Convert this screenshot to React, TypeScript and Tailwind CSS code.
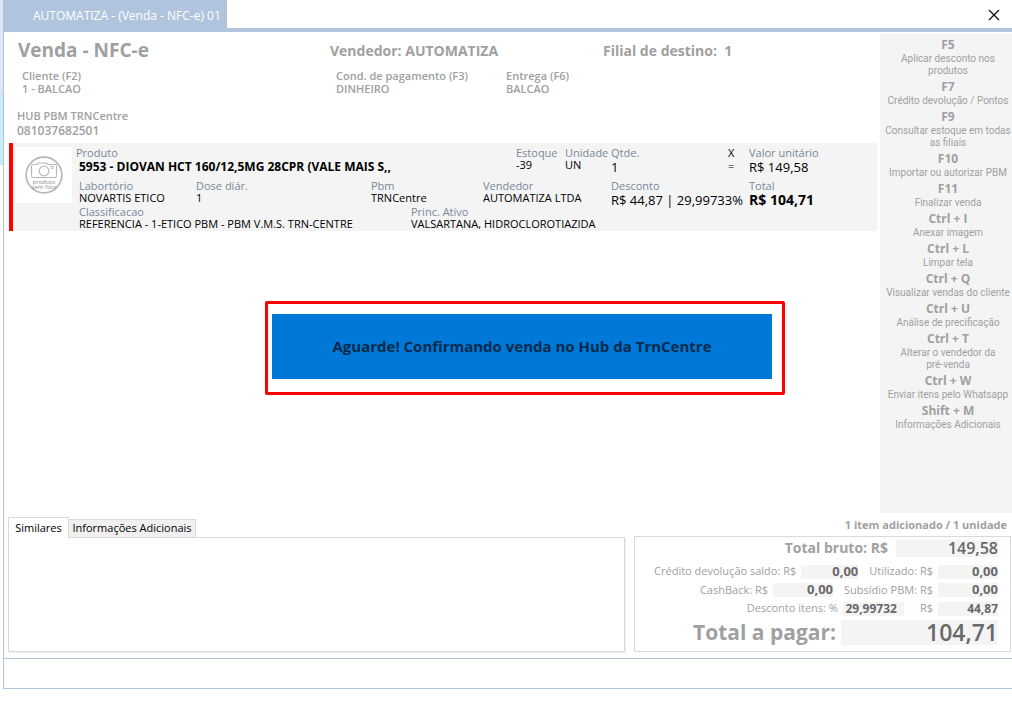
import type { ReactNode } from "react";

const shortcuts = [
  { keys: "F5", lines: ["Aplicar desconto nos", "produtos"] },
  { keys: "F7", lines: ["Crédito devolução / Pontos"] },
  { keys: "F9", lines: ["Consultar estoque em todas", "as filiais"] },
  { keys: "F10", lines: ["Importar ou autorizar PBM"] },
  { keys: "F11", lines: ["Finalizar venda"] },
  { keys: "Ctrl + I", lines: ["Anexar imagem"] },
  { keys: "Ctrl + L", lines: ["Limpar tela"] },
  { keys: "Ctrl + Q", lines: ["Visualizar vendas do cliente"] },
  { keys: "Ctrl + U", lines: ["Análise de precificação"] },
  { keys: "Ctrl + T", lines: ["Alterar o vendedor da", "pré-venda"] },
  { keys: "Ctrl + W", lines: ["Enviar itens pelo Whatsapp"] },
  { keys: "Shift + M", lines: ["Informações Adicionais"] },
];

function TitleBar() {
  return (
    <header className="flex h-8 items-stretch justify-between border-b-4 border-[#b0c4de]">
      <div className="flex w-[223px] items-center bg-[#b0c4de] pt-1 pl-[29px] text-xs text-white">
        AUTOMATIZA - (Venda - NFC-e) 01
      </div>
      <button type="button" aria-label="Fechar" className="mr-3 flex w-3 items-center pt-0.5">
        <svg viewBox="0 0 12 12" className="h-3 w-3" stroke="#111" strokeWidth="1.3" fill="none">
          <path d="M1 1 11 11M11 1 1 11" />
        </svg>
      </button>
    </header>
  );
}

function Info({ label, value }: { label: string; value: string }) {
  return (
    <div className="text-[11px] leading-[13px] font-semibold">
      <div>{label}</div>
      <div>{value}</div>
    </div>
  );
}

function SaleHeader() {
  return (
    <section className="h-[111px] text-[#a0a0a0]">
      <div className="grid h-[37px] grid-cols-[312px_273px_1fr] items-center pl-[14px] font-bold">
        <h1 className="text-[19px]">Venda - NFC-e</h1>
        <div className="text-sm">Vendedor: AUTOMATIZA</div>
        <div className="text-sm whitespace-pre">Filial de destino:  1</div>
      </div>
      <div className="grid grid-cols-[314px_170px_1fr] pl-[18px]">
        <Info label="Cliente (F2)" value="1 - BALCAO" />
        <Info label="Cond. de pagamento (F3)" value="DINHEIRO" />
        <Info label="Entrega (F6)" value="BALCAO" />
      </div>
      <div className="pt-[14px] pl-[13px] font-semibold">
        <div className="text-[11px] leading-[14px]">HUB PBM TRNCentre</div>
        <div className="text-xs leading-4">081037682501</div>
      </div>
    </section>
  );
}

function ProductPhoto() {
  return (
    <div className="flex h-14 w-14 items-center justify-center bg-white">
      <svg viewBox="0 0 38 38" className="h-[38px] w-[38px]" fill="none" stroke="#b8b8b8">
        <circle cx="19" cy="19" r="17.800" strokeWidth="1.700" />
        <path d="M6.500 20V10q0-1.500 1.500-1.500h4l1.500-1.500h8l1.500 1.500h7q1.500 0 1.500 1.500v10q0 1.500-1.500 1.500H8q-1.500 0-1.500-1.500Z" strokeWidth="1.200" />
        <circle cx="19" cy="15" r="4.800" strokeWidth="1.200" />
        <rect x="26" y="10.500" width="2.500" height="2" strokeWidth=".8" />
        <g fill="#8c8c8c" stroke="none" fontSize="6" textAnchor="middle" fontFamily="Open Sans, sans-serif">
          <text x="19" y="27.500">produto</text>
          <text x="19" y="32.500">sem foto</text>
        </g>
      </svg>
    </div>
  );
}

function Cell({ label, className = "text-[11px]", children }: { label: string; className?: string; children: ReactNode }) {
  return (
    <div className="whitespace-nowrap">
      <div className="text-[11px] leading-[13px] text-[#778899]">{label}</div>
      <div className={"leading-3 " + className}>{children}</div>
    </div>
  );
}

function ProductCard() {
  return (
    <article className="ml-[5px] flex h-[88px] border-l-4 border-[#ff0000] bg-[#f4f4f4] pl-[3px] text-black">
      <div className="pt-1">
        <ProductPhoto />
      </div>
      <div className="flex-1 pt-[3px] pl-[7px]">
        <div className="grid h-[33px] grid-cols-[437px_49px_46px_117px_21px_1fr]">
          <div className="-ml-[3px]">
            <div className="text-[11px] leading-[13px] text-[#778899]">Produto</div>
            <div className="pl-[3px] text-xs leading-4 font-bold">5953 - DIOVAN HCT 160/12,5MG 28CPR (VALE MAIS S,,</div>
          </div>
          <Cell label="Estoque">-39</Cell>
          <Cell label="Unidade">UN</Cell>
          <Cell label="Qtde." className="pt-0.5 text-[13px]">1</Cell>
          <div className="text-[11px] leading-[13px]">
            <div>X</div>
            <div>=</div>
          </div>
          <Cell label="Valor unitário" className="pt-0.5 text-[13px]">R$ 149,58</Cell>
        </div>
        <div className="grid h-[26px] grid-cols-[117px_175px_112px_128px_138px_1fr]">
          <Cell label="Labortório">NOVARTIS ETICO</Cell>
          <Cell label="Dose diár.">1</Cell>
          <Cell label="Pbm">TRNCentre</Cell>
          <Cell label="Vendedor">AUTOMATIZA LTDA</Cell>
          <Cell label="Desconto" className="pt-0.5 text-[13px]">R$ 44,87 | 29,99733%</Cell>
          <Cell label="Total" className="pt-0.5 text-sm font-bold">R$ 104,71</Cell>
        </div>
        <div className="grid grid-cols-[332px_1fr]">
          <Cell label="Classificacao">REFERENCIA - 1-ETICO PBM - PBM V.M.S. TRN-CENTRE</Cell>
          <Cell label="Princ. Ativo">VALSARTANA, HIDROCLOROTIAZIDA</Cell>
        </div>
      </div>
    </article>
  );
}

function ShortcutPanel() {
  return (
    <aside className="mt-0.5 w-[132px] shrink-0 bg-[#f4f4f4] pt-[3px] pl-1 text-[#a0a0a0]">
      {shortcuts.map((s) => (
        <button key={s.keys} type="button" className="mb-0.5 block w-full text-center whitespace-nowrap">
          <span className="block text-xs leading-4 font-bold">{s.keys}</span>
          {s.lines.map((line) => (
            <span key={line} className="block font-['Roboto','Noto_Sans',sans-serif] text-[10px] leading-3">{line}</span>
          ))}
        </button>
      ))}
    </aside>
  );
}

function Tabs() {
  return (
    <section className="ml-1 flex flex-1 flex-col pt-1 text-[11px] text-black">
      <div role="tablist" className="flex items-end">
        <button type="button" role="tab" aria-selected="true" className="z-10 -mb-px h-[21px] w-[61px] border border-b-0 border-[#d9d9d9] bg-white">
          Similares
        </button>
        <button type="button" role="tab" aria-selected="false" className="h-[18px] w-[127px] border border-b-0 border-l-0 border-[#d9d9d9] bg-[#f0f0f0]">
          Informações Adicionais
        </button>
      </div>
      <div role="tabpanel" className="flex-1 border border-[#d9d9d9] shadow-[1px_1px_0_#f0f0f0]" />
    </section>
  );
}

function Field({ label, value, labelClass = "text-[11px]", inputClass = "h-[14px] w-[60px] text-[13px] font-bold" }: {
  label: string;
  value: string;
  labelClass?: string;
  inputClass?: string;
}) {
  return (
    <label className="flex items-center gap-[5px]">
      <span className={"whitespace-nowrap " + labelClass}>{label}</span>
      <input readOnly value={value} className={"bg-[#f4f4f4] p-0 text-right text-[#696969] outline-none " + inputClass} />
    </label>
  );
}

function Totals() {
  return (
    <section className="flex w-[378px] shrink-0 flex-col text-[#a0a0a0]">
      <div className="h-[23px] pt-1 pr-[5px] text-right text-[11px] leading-4 font-bold">1 item adicionado / 1 unidade</div>
      <div className="mr-px flex flex-1 flex-col items-end border border-[#d9d9d9] pt-0.5 pr-3">
        <div className="flex h-[23px] items-start">
          <Field label="Total bruto: R$" value="149,58" labelClass="mr-[3px] text-sm leading-[18px] font-bold" inputClass="h-[17px] w-[102px] text-base font-semibold" />
        </div>
        <div className="flex h-[19px] items-center gap-[11px]">
          <Field label="Crédito devolução saldo: R$" value="0,00" inputClass="h-[14px] w-[57px] text-[13px] font-bold" />
          <Field label="Utilizado: R$" value="0,00" />
        </div>
        <div className="flex h-[18px] items-center gap-[11px]">
          <Field label="CashBack: R$" value="0,00" />
          <Field label="Subsídio PBM: R$" value="0,00" />
        </div>
        <div className="flex h-[19px] items-center gap-4">
          <Field label="Desconto itens: %" value="29,99732" inputClass="h-[14px] w-[61px] pr-[7px] text-xs font-bold" />
          <Field label="R$" value="44,87" inputClass="h-[14px] w-[60px] text-xs font-bold" />
        </div>
        <div className="flex h-[28px] items-center">
          <Field label="Total a pagar:" value="104,71" labelClass="text-[21px] leading-7 font-bold" inputClass="h-[25px] w-[157px] text-[23px] font-semibold" />
        </div>
      </div>
    </section>
  );
}

function WaitDialog() {
  return (
    <div role="dialog" aria-label="Aguarde" className="absolute top-[301px] left-[265px] rounded-xs border-3 border-[#ff0000] bg-white pt-[10px] pr-[10px] pb-[13px] pl-1">
      <div className="flex h-[65px] w-[500px] items-center justify-center bg-[#0078d7] text-[15px] font-bold text-[#062a4a]">
        Aguarde! Confirmando venda no Hub da TrnCentre
      </div>
    </div>
  );
}

export default function App() {
  return (
    <div className="relative flex min-h-screen overflow-hidden bg-white font-['Open_Sans','Noto_Sans',sans-serif]">
      <div className="w-[3px] shrink-0">
        <div className="h-[94px] border-b border-[#e8dcd0] bg-[#dbe6f6]" />
        <div className="h-[71px] bg-[#c8ecff]" />
      </div>
      <div className="mb-3 flex flex-1 flex-col border-b border-l border-[#b0c4de]">
        <TitleBar />
        <div className="flex flex-1">
          <main className="mr-[3px] flex-1">
            <SaleHeader />
            <ProductCard />
          </main>
          <ShortcutPanel />
        </div>
        <div className="flex h-[139px] gap-[9px]">
          <Tabs />
          <Totals />
        </div>
        <footer className="mt-1.5 h-[30px] border-t border-[#b0c4de]" />
      </div>
      <WaitDialog />
    </div>
  );
}
